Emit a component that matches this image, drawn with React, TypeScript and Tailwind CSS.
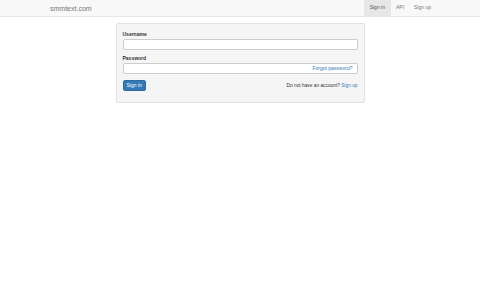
export default function App() {
  return (
    <div className="min-h-screen bg-white font-['Liberation_Sans',Arial,sans-serif] text-[#333]">
      <nav className="flex h-[17px] items-center justify-between border-b border-[#e7e7e7] bg-[#f8f8f8] pl-[50px] pr-[44px]">
        <span className="text-[7px] leading-none text-[#777]">smmtext.com</span>
        <ul className="flex h-full items-stretch text-[5px] text-[#777]">
          <li className="flex items-center bg-[#e7e7e7] px-[6px] text-[#555]">Sign in</li>
          <li className="flex items-center px-[5px]">API</li>
          <li className="flex items-center px-[5px]">Sign up</li>
        </ul>
      </nav>

      <div className="mx-auto mt-[6px] w-[249px] rounded-[2px] border border-[#e3e3e3] bg-[#f5f5f5] px-[6px] pb-[11px] pt-[6px]">
        <div className="mb-[1px] text-[5px] font-bold leading-[8px]">Username</div>
        <div className="h-[11px] rounded-[2px] border border-[#ccc] bg-white" />

        <div className="mb-[1px] mt-[4px] text-[5px] font-bold leading-[8px]">Password</div>
        <div className="flex h-[11px] items-center justify-end rounded-[2px] border border-[#ccc] bg-white pr-[4px]">
          <span className="text-[5px] text-[#337ab7]">Forgot password?</span>
        </div>

        <div className="mt-[6px] flex items-center justify-between">
          <button className="h-[11px] rounded-[2px] border border-[#2e6da4] bg-[#337ab7] px-[3px] text-[5px] leading-none text-white">
            Sign in
          </button>
          <span className="mt-[1px] text-[4.8px]">
            Do not have an account? <span className="text-[#337ab7]">Sign up</span>
          </span>
        </div>
      </div>
    </div>
  );
}
